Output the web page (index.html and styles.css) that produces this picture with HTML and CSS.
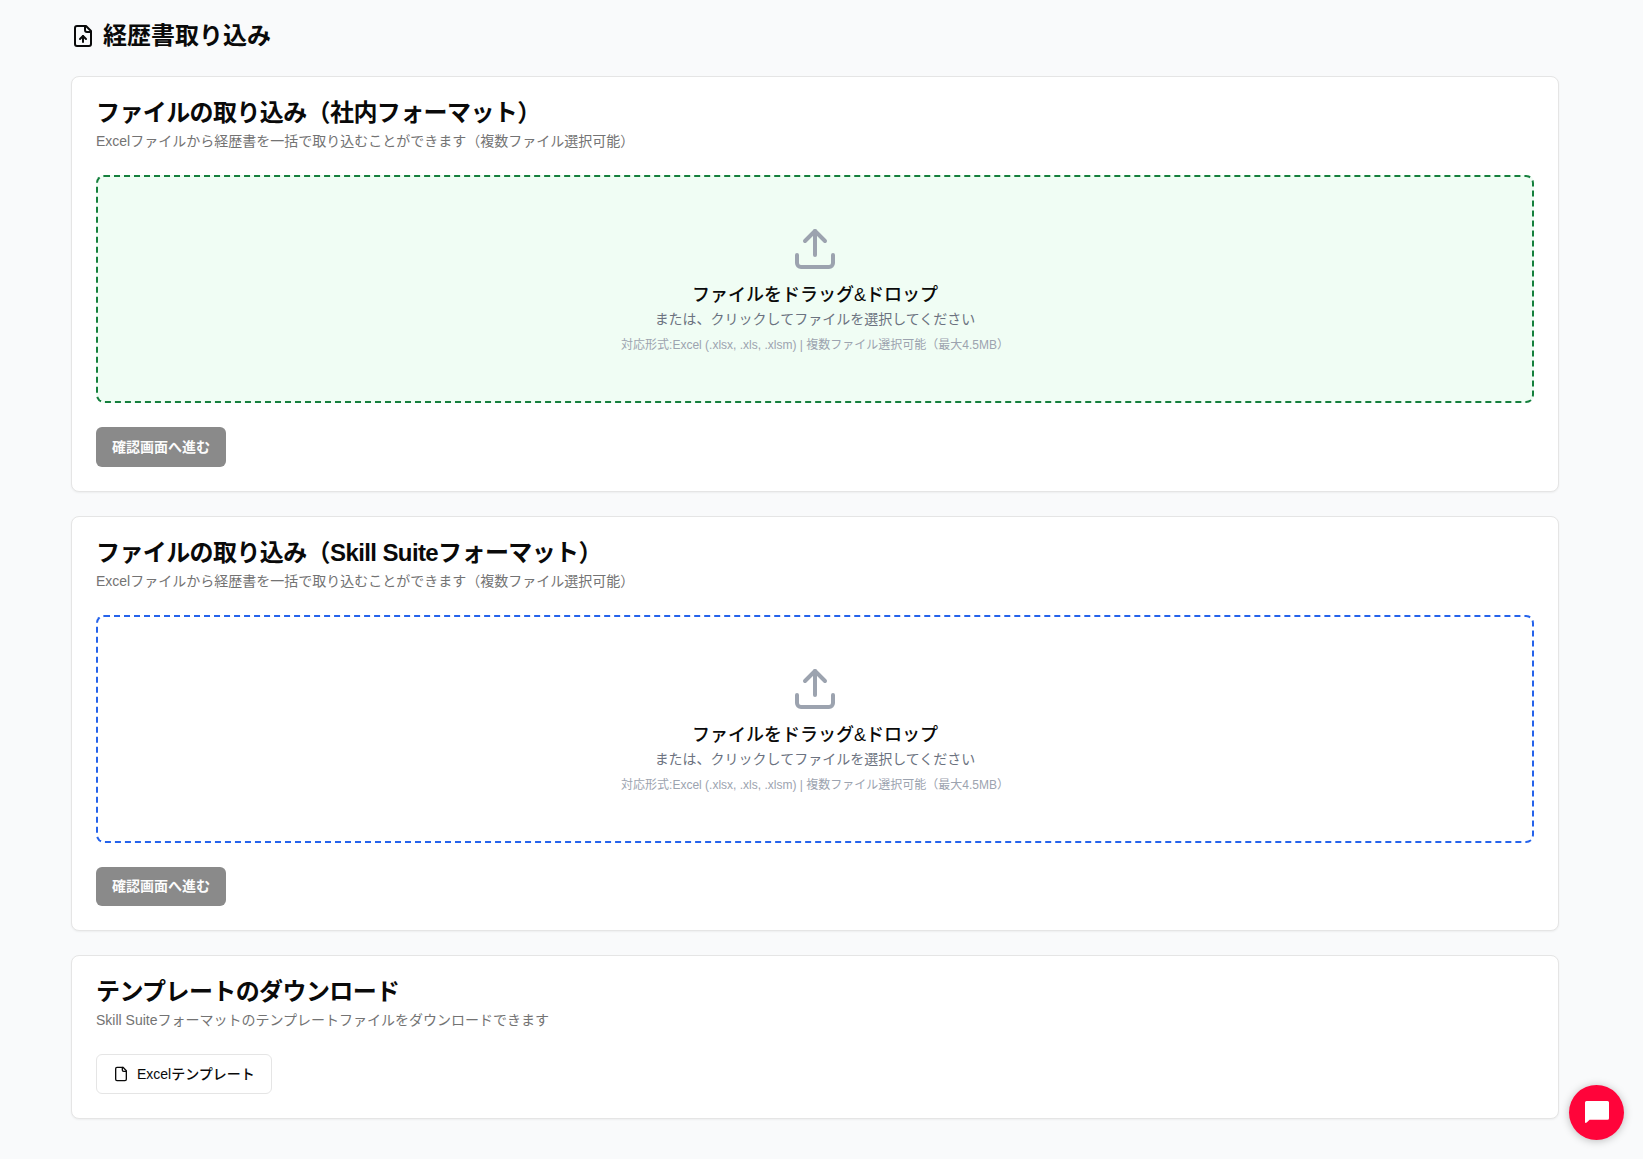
FILE: index.html
```html
<!DOCTYPE html>
<html lang="ja">
<head>
<meta charset="utf-8">
<title>経歴書取り込み</title>
<link rel="stylesheet" href="styles.css">
</head>
<body>
<main class="page">
  <h1 class="page-title">
    <svg class="title-icon" viewBox="0 0 24 24"><path d="M15 2H6a2 2 0 0 0-2 2v16a2 2 0 0 0 2 2h12a2 2 0 0 0 2-2V7Z"/><path d="M14 2v4a2 2 0 0 0 2 2h4"/><path d="M12 12v6"/><path d="m15 15-3-3-3 3"/></svg>
    <span>経歴書取り込み</span>
  </h1>
  <section class="card">
    <h2 class="card-title">ファイルの取り込み（社内フォーマット）</h2>
    <p class="card-desc">Excelファイルから経歴書を一括で取り込むことができます（複数ファイル選択可能）</p>
    <div class="dropzone dropzone-green">
      <svg class="upload-icon" viewBox="0 0 24 24"><path d="M21 15v4a2 2 0 0 1-2 2H5a2 2 0 0 1-2-2v-4"/><path d="m17 8-5-5-5 5"/><path d="M12 3v12"/></svg>
      <p class="drop-title">ファイルをドラッグ&amp;ドロップ</p>
      <p class="drop-text">または、クリックしてファイルを選択してください</p>
      <p class="drop-note">対応形式:Excel (.xlsx, .xls, .xlsm) | 複数ファイル選択可能（最大4.5MB）</p>
    </div>
    <button class="button button-primary" disabled>確認画面へ進む</button>
  </section>
  <section class="card">
    <h2 class="card-title">ファイルの取り込み（Skill Suiteフォーマット）</h2>
    <p class="card-desc">Excelファイルから経歴書を一括で取り込むことができます（複数ファイル選択可能）</p>
    <div class="dropzone dropzone-blue">
      <svg class="upload-icon" viewBox="0 0 24 24"><path d="M21 15v4a2 2 0 0 1-2 2H5a2 2 0 0 1-2-2v-4"/><path d="m17 8-5-5-5 5"/><path d="M12 3v12"/></svg>
      <p class="drop-title">ファイルをドラッグ&amp;ドロップ</p>
      <p class="drop-text">または、クリックしてファイルを選択してください</p>
      <p class="drop-note">対応形式:Excel (.xlsx, .xls, .xlsm) | 複数ファイル選択可能（最大4.5MB）</p>
    </div>
    <button class="button button-primary" disabled>確認画面へ進む</button>
  </section>
  <section class="card">
    <h2 class="card-title">テンプレートのダウンロード</h2>
    <p class="card-desc">Skill Suiteフォーマットのテンプレートファイルをダウンロードできます</p>
    <button class="button button-outline">
      <svg class="button-icon" viewBox="0 0 24 24"><path d="M15 2H6a2 2 0 0 0-2 2v16a2 2 0 0 0 2 2h12a2 2 0 0 0 2-2V7Z"/><path d="M14 2v4a2 2 0 0 0 2 2h4"/></svg>
      <span>Excelテンプレート</span>
    </button>
  </section>
</main>
<button class="chat" aria-label="チャット"><svg class="chat-icon" viewBox="0 0 24 22"><path d="M1.5 0h21A1.5 1.5 0 0 1 24 1.5v15.8a1.5 1.5 0 0 1-1.5 1.5H4.6L1.7 21.6Q0 22.4 0 21V1.5A1.5 1.5 0 0 1 1.5 0Z"/></svg></button>
</body>
</html>
```

FILE: styles.css
```css
* { box-sizing: border-box; }
body {
  margin: 0;
  min-height: 100vh;
  background: #f9fafb;
  color: #0a0a0a;
  font-family: "Liberation Sans", "Noto Sans CJK JP", sans-serif;
}
h1, h2, p { margin: 0; }
svg { flex-shrink: 0; fill: none; stroke: currentColor; stroke-width: 2; stroke-linecap: round; stroke-linejoin: round; }
.page {
  width: 1488px;
  margin-left: 71px;
  padding-top: 20px;
  display: flex;
  flex-direction: column;
  gap: 24px;
}
.page-title {
  display: flex;
  align-items: center;
  gap: 8px;
  font-size: 24px;
  line-height: 32px;
}
.title-icon { width: 24px; height: 24px; }
.card {
  padding: 24px;
  border: 1px solid #e5e5e5;
  border-radius: 8px;
  background: #fff;
  box-shadow: 0 1px 2px rgba(0, 0, 0, .05);
}
.card-title { font-size: 24px; line-height: 24px; letter-spacing: -.025em; }
.card-desc { margin: 6px 0 24px; font-size: 14px; line-height: 20px; color: #737373; }
.dropzone {
  height: 228px;
  padding-top: 48px;
  border: 2px dashed;
  border-radius: 8px;
  text-align: center;
}
.dropzone-green { border-color: #15803d; background: #f0fdf4; }
.dropzone-blue { border-color: #2563eb; }
.upload-icon { display: block; width: 48px; height: 48px; margin: 0 auto 8px; color: #9ca3af; }
.drop-title { font-size: 18px; line-height: 28px; font-weight: 500; }
.drop-text { font-size: 14px; line-height: 20px; color: #6b7280; }
.drop-note { margin-top: 8px; font-size: 12px; line-height: 16px; color: #9ca3af; }
.button {
  display: flex;
  align-items: center;
  justify-content: center;
  gap: 8px;
  height: 39.6px;
  padding: 0 16px;
  border: 0;
  border-radius: 6px;
  font-family: inherit;
  font-size: 14px;
  line-height: 20px;
}
.button-primary { margin-top: 24px; background: #171717; color: #fafafa; font-weight: 700; opacity: .5; }
.button-outline { border: 1px solid #e5e5e5; background: #fff; color: #0a0a0a; font-weight: 500; }
.button-icon { width: 16px; height: 16px; }
.chat {
  position: fixed;
  right: 19px;
  bottom: 19px;
  width: 55px;
  height: 55px;
  display: grid;
  place-items: center;
  padding: 0 0 1px;
  border: 0;
  border-radius: 50%;
  background: #ff043a;
  box-shadow: 0 1px 8px rgba(0, 0, 0, .25);
}
.chat-icon { width: 24px; height: 22px; fill: #fff; stroke: none; }
```
